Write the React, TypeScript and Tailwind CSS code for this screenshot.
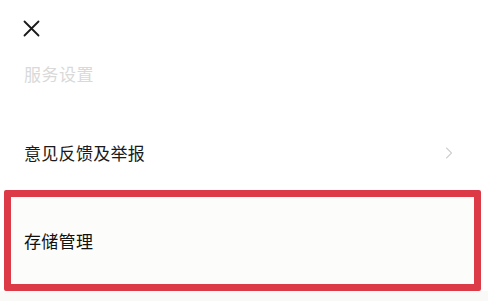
import { ChevronRight } from "lucide-react";

const font = { fontFamily: '"Noto Sans CJK SC", "Noto Sans", sans-serif' };

export default function App() {
  return (
    <div className="w-[488px] h-[301px] bg-white overflow-hidden flex flex-col" style={font}>
      {/* close */}
      <div className="h-[58px] pl-[23px] pt-[20px]">
        <svg width="17" height="17" viewBox="0 0 17 17" fill="none">
          <path d="M1.5 1.5 L15.5 15.5 M15.5 1.5 L1.5 15.5" stroke="#1a1a1a" strokeWidth="1.8" strokeLinecap="round" />
        </svg>
      </div>

      {/* section title */}
      <div className="pl-[24px] h-[32px] flex items-center text-[17px] text-[#d9d9d9] tracking-[0.5px]">
        服务设置
      </div>

      {/* feedback row */}
      <div className="mt-[32px] h-[62px] pl-[24px] pr-[29px] flex items-center justify-between">
        <span className="text-[17px] text-[#1a1a1a] tracking-[0.3px]">意见反馈及举报</span>
        <ChevronRight size={20} strokeWidth={1.4} className="text-[#d0d0d0]" />
      </div>

      {/* storage row (highlighted) */}
      <div className="ml-[4px] mr-[7px] mt-[6px] h-[101px] shrink-0 border-[7px] border-[#dc3a47] rounded-[2px] bg-[#fcfdfa] flex items-center pl-[13px]">
        <span className="text-[17px] text-[#111] tracking-[0.3px]">存储管理</span>
      </div>

      <div className="flex-1 bg-[#f9f9f8]" />
    </div>
  );
}
